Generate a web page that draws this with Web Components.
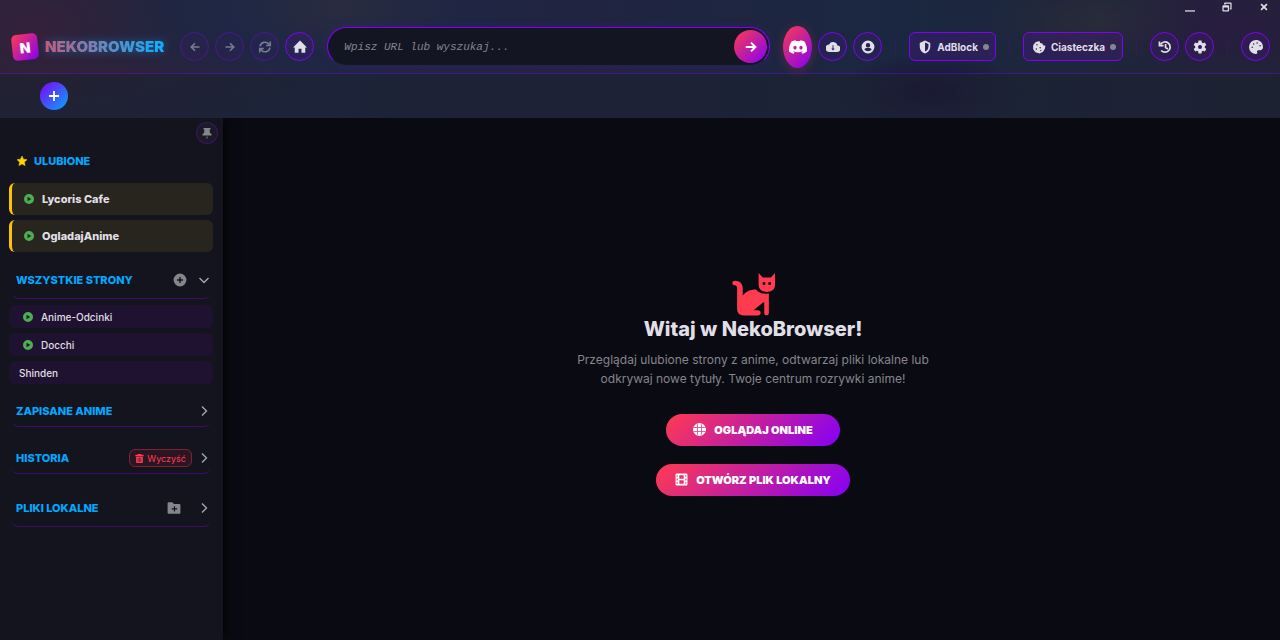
<!DOCTYPE html>
<html lang="pl">
<head>
<meta charset="utf-8">
<meta name="viewport" content="width=device-width, initial-scale=1">
<title>NekoBrowser</title>
<style>
  :root {
    --bg: #0a0a12;
    --panel: #14141f;
    --text: #e0dfe6;
    --muted: #85858c;
    --red: #ff3b50;
    --violet: #8400f5;
    --blue: #00a8ff;
    --green: #4caf50;
  }
  body {
    margin: 0;
    background: var(--bg);
    color: var(--text);
    font-family: Inter, Roboto, "Liberation Sans", sans-serif;
    font-size: 11px;
  }
</style>
</head>
<body>
<neko-app></neko-app>

<script>
const icons = {
  back: '<path d="M21 12H5M12 4.500 4.500 12l7.500 7.500" fill="none" stroke="currentColor" stroke-width="3.400"/>',
  forward: '<path d="M3 12h16M12 4.500l7.500 7.500-7.500 7.500" fill="none" stroke="currentColor" stroke-width="3.400"/>',
  sync: '<path d="M3.500 11a8.500 8.500 0 0 1 15-4l2 2M20.500 13a8.500 8.500 0 0 1-15 4l-2-2M21 2.500v7h-7M3 21.500v-7h7" fill="none" stroke="currentColor" stroke-width="2.800"/>',
  home: '<path d="M9.500 22v-7h5v7H21v-9h3L12 1 0 13h3v9z"/>',
  discord: '<path d="M20.317 4.370a19.790 19.790 0 0 0-4.885-1.515.074.074 0 0 0-.079.037c-.211.375-.445.865-.608 1.250-1.845-.276-3.680-.276-5.487 0-.164-.393-.406-.874-.618-1.250a.077.077 0 0 0-.078-.037 19.736 19.736 0 0 0-4.885 1.515.070.070 0 0 0-.032.028C.533 9.046-.319 13.580.099 18.058a.082.082 0 0 0 .031.056c2.053 1.508 4.041 2.423 5.993 3.029a.078.078 0 0 0 .084-.028c.462-.630.873-1.295 1.226-1.994a.076.076 0 0 0-.042-.106c-.653-.248-1.274-.550-1.872-.892a.077.077 0 0 1-.008-.128c.126-.094.252-.192.372-.291a.074.074 0 0 1 .078-.011c3.928 1.793 8.180 1.793 12.061 0a.074.074 0 0 1 .079.010c.120.099.246.198.373.292a.077.077 0 0 1-.007.128 12.299 12.299 0 0 1-1.873.891.077.077 0 0 0-.041.107c.360.698.772 1.363 1.225 1.993a.076.076 0 0 0 .084.029c1.961-.607 3.950-1.522 6.002-3.029a.077.077 0 0 0 .031-.055c.500-5.177-.838-9.674-3.549-13.660zM8.020 15.331c-1.183 0-2.157-1.086-2.157-2.419s.956-2.419 2.157-2.419c1.211 0 2.176 1.095 2.157 2.419 0 1.333-.956 2.419-2.157 2.419zm7.975 0c-1.183 0-2.157-1.086-2.157-2.419s.955-2.419 2.157-2.419c1.211 0 2.176 1.095 2.157 2.419 0 1.333-.946 2.419-2.157 2.419z"/>',
  cloud: '<path fill-rule="evenodd" d="M19.350 9.500A7.490 7.490 0 0 0 5.350 7.500 6.300 6.300 0 0 0 6 20.500h13a5.500 5.500 0 0 0 .350-11zM11.200 9h1.600v5.500h2.200L12 17.800l-3-3.300h2.200z"/>',
  user: '<path fill-rule="evenodd" d="M12 1a11 11 0 1 0 0 22 11 11 0 0 0 0-22zm0 4a3.800 3.800 0 1 1 0 7.600A3.800 3.800 0 0 1 12 5zm-6.500 11c1-2 4-2.800 6.500-2.800s5.500.8 6.500 2.800a7.800 7.800 0 0 1-13 0z"/>',
  shield: '<path fill-rule="evenodd" d="M12 1 3 5v6c0 5.500 3.800 10.700 9 12 5.200-1.300 9-6.500 9-12V5zm0 3.300 6 2.700v4c0 4-2.500 7.600-6 8.800z"/>',
  cookie: '<path fill-rule="evenodd" d="M11 2 6 4 2 9v7l4 5 7 2 6-3 3-5 1-5-4-1-1-3-4-1-1-3zM8.500 7a1.300 1.300 0 1 1 0 2.600 1.300 1.300 0 0 1 0-2.600zM7.500 14a1.300 1.300 0 1 1 0 2.600 1.300 1.300 0 0 1 0-2.600zm6.500-2a1.300 1.300 0 1 1 0 2.600 1.300 1.300 0 0 1 0-2.600zm1 5a1.200 1.200 0 1 1 0 2.400 1.200 1.200 0 0 1 0-2.400z"/>',
  history: '<path d="M4.500 7.500a8.800 8.800 0 1 1 1 10.500M2.500 2.500v7h7M13 7v6l4 2.500" fill="none" stroke="currentColor" stroke-width="3"/>',
  cog: '<path fill-rule="evenodd" d="M9.500 1h5l.6 3.300 2 1.200L20.300 4.400l2.500 4.300-2.500 2.200v2.300l2.500 2.200-2.500 4.300-3.200-1.100-2 1.200-.6 3.200h-5l-.6-3.200-2-1.200-3.200 1.100-2.500-4.300 2.500-2.200v-2.300L1.200 8.700l2.500-4.300 3.200 1.100 2-1.200zM12 8.600a3.400 3.400 0 1 0 0 6.800 3.400 3.400 0 0 0 0-6.800z"/>',
  palette: '<path fill-rule="evenodd" d="M12 0a12 12 0 0 0 0 24c2 0 2.600-1.600 2-3-.8-1.800 0-3.500 2-3.500h3c2.800 0 5-2 5-5C24 4 18 0 12 0zM5.500 11a1.300 1.300 0 1 1 0 2.600 1.300 1.300 0 0 1 0-2.600zm2.500-5.500a1.300 1.300 0 1 1 0 2.600 1.300 1.300 0 0 1 0-2.600zM14 4a1.300 1.300 0 1 1 0 2.600A1.300 1.300 0 0 1 14 4zm5 4.500a1.300 1.300 0 1 1 0 2.600 1.300 1.300 0 0 1 0-2.600z"/>',
  plus: '<path d="M12 2v20M2 12h20" fill="none" stroke="currentColor" stroke-width="3.600"/>',
  pin: '<path d="M5 2h14v3h-2l1 7 3 2v3H3v-3l3-2 1-7H5z"/><path d="M11 19h2v4h-2z"/>',
  star: '<path d="m12 2 3 6.500 7 .8-5.200 4.900 1.300 7L12 17.800 5.900 21.200l1.300-7L2 9.300l7-.8z" stroke="currentColor" stroke-linejoin="round"/>',
  play: '<path fill-rule="evenodd" d="M12 0a12 12 0 1 0 0 24 12 12 0 0 0 0-24zM8.500 6.500v11l9-5.500z"/>',
  add: '<path fill-rule="evenodd" d="M12 1a11 11 0 1 0 0 22 11 11 0 0 0 0-22zm-1.200 6h2.400v3.800H17v2.400h-3.800V17h-2.400v-3.800H7v-2.400h3.800z"/>',
  down: '<path d="m3 8 9 9 9-9" fill="none" stroke="currentColor" stroke-width="2.800"/>',
  right: '<path d="m8 3 9 9-9 9" fill="none" stroke="currentColor" stroke-width="2.800"/>',
  trash: '<path fill-rule="evenodd" d="M8 0h8l1 2h6v4H1V2h6zM3 7h18v15c0 1-1 2-2 2H5c-1 0-2-1-2-2zm4.500 3v11H9V10zm7.500 0v11h1.500V10zm-3.700 0v11h1.400V10z"/>',
  folder: '<path fill-rule="evenodd" d="M1 4c0-1 1-2 2-2h6l3 3h9c1 0 2 1 2 2v13c0 1-1 2-2 2H3c-1 0-2-1-2-2zm10.800 5v3.500H8v2h3.800V18h2v-3.500h3.700v-2h-3.700V9z"/>',
  globe: '<path fill-rule="evenodd" d="M12 0a12 12 0 1 0 0 24 12 12 0 0 0 0-24zM1.500 7.500h5.800v1.300H1zm7.200 0h6.600v1.300H8.700zm8 0h5.800l.5 1.300h-6.300zM1 15.200h6.300v1.300H1.500zm7.700 0h6.600v1.300H8.700zm8 0H23l-.5 1.300h-5.800zM8.300 1.300 7.500 7v10l1 5.700h1.200L8.800 17V7l.9-5.700zm6 0 .9 5.700v10l-.9 5.700h1.200l1-5.700V7l-1-5.700z"/>',
  film: '<path fill-rule="evenodd" d="M3 1h18a2 2 0 0 1 2 2v18a2 2 0 0 1-2 2H3a2 2 0 0 1-2-2V3c0-1 1-2 2-2zm0 3v3h2V4zm0 6v4h2v-4zm0 7v3h2v-3zM19 4v3h2V4zm0 6v4h2v-4zm0 7v3h2v-3zM8 4v6.500h8V4zm0 9.500V20h8v-6.500z"/>',
  restore: '<path fill-rule="evenodd" d="M7 1h14a2 2 0 0 1 2 2v13a2 2 0 0 1-2 2h-2v-3h1V4H9v2H5V3c0-1 1-2 2-2zM3 8h12a2 2 0 0 1 2 2v11a2 2 0 0 1-2 2H3a2 2 0 0 1-2-2V10c0-1 1-2 2-2zm1 5v7h10v-7z"/>',
  close: '<path d="m5 5 14 14M19 5 5 19" fill="none" stroke="currentColor" stroke-width="4"/>',
  minimize: '<path d="M0 20h24v3H0z"/>',
  cat: '<path d="M3 7.500c4.500 0 7.500 3 7.500 7.500v7c3-4 7-6 13-6 2 3 6 5 12.500 4v19c0 3-4.500 3-4.500 0V28L21 36.500h4c4 0 4 5 0 5H11c-4 0-6-3-6-6V15c0-2-1-3-2.500-3-3 0-3-4.500.5-4.500z"/><path fill-rule="evenodd" d="m26 0 4 4.500h8L42 0v12c0 4-3.500 6.500-8 6.500s-8-2.500-8-6.500zm4 9v2.500h2.500V9zm5.500 0v2.500H38V9z"/>'
};

// shared helper: every element clones its own template into an open root
function mount(host, html) {
  const template = document.createElement("template");
  template.innerHTML = `<style>*, *::before, *::after { box-sizing: border-box; }</style>` + html;
  host.attachShadow({ mode: "open" }).appendChild(template.content.cloneNode(true));
}

customElements.define(
  "neko-icon",
  class extends HTMLElement {
    constructor() {
      super();
      const name = this.getAttribute("name");
      const box = name === "cat" ? "0 0 42 42" : "0 0 24 24";
      mount(this, `
        <style>
          :host { display: inline-flex; flex: none; width: 14px; height: 14px; }
          svg { display: block; width: 100%; height: 100%; }
        </style>
        <svg viewBox="${box}" fill="currentColor" aria-hidden="true">${icons[name]}</svg>
      `);
    }
  }
);

customElements.define(
  "round-button",
  class extends HTMLElement {
    constructor() {
      super();
      const off = this.hasAttribute("disabled") ? "disabled" : "";
      mount(this, `
        <style>
          :host { display: block; flex: none; }
          button {
            display: flex;
            align-items: center;
            justify-content: center;
            width: 29px;
            height: 29px;
            padding: 0;
            border: 1px solid var(--violet);
            border-radius: 50%;
            background: #8400f51c;
            color: var(--text);
          }
          button:disabled { opacity: 0.45; }
          :host([icon="back"]) neko-icon, :host([icon="forward"]) neko-icon { width: 12px; height: 12px; }
          :host([kind="discord"]) button {
            height: 42px;
            border: 0;
            color: #fff;
            background: linear-gradient(135deg, var(--red), var(--violet));
            box-shadow: 0 2px 12px #ff3b5040;
          }
          :host([kind="discord"]) neko-icon { width: 18px; height: 18px; }
          :host([kind="go"]) button {
            width: 33px;
            height: 33px;
            border: 0;
            color: #fff;
            background: linear-gradient(135deg, var(--red), var(--violet));
          }
          :host([kind="go"]) neko-icon { width: 14px; height: 14px; }
          :host([kind="tab"]) button {
            width: 28px;
            height: 28px;
            border: 0;
            color: #fff;
            background: linear-gradient(135deg, var(--violet), #00a8ff);
          }
          :host([kind="pin"]) button {
            width: 22px;
            height: 22px;
            border-color: #8400f550;
            background: #ffffff08;
            color: var(--muted);
          }
          :host([kind="pin"]) neko-icon, :host([kind="tab"]) neko-icon { width: 12px; height: 12px; }
        </style>
        <button type="button" aria-label="${this.getAttribute("label")}" ${off}>
          <neko-icon name="${this.getAttribute("icon")}"></neko-icon>
        </button>
      `);
    }
  }
);

customElements.define(
  "status-button",
  class extends HTMLElement {
    constructor() {
      super();
      mount(this, `
        <style>
          :host { display: block; flex: none; }
          button {
            display: flex;
            align-items: center;
            gap: 5px;
            height: 29px;
            padding: 0 6px 0 8px;
            border: 1px solid var(--violet);
            border-radius: 6px;
            background: #8400f524;
            color: var(--text);
            font: 700 10px Inter, Roboto, sans-serif;
          }
          i { width: 6px; height: 6px; border-radius: 50%; background: var(--muted); }
        </style>
        <button type="button">
          <neko-icon name="${this.getAttribute("icon")}"></neko-icon>
          <slot></slot><i></i>
        </button>
      `);
    }
  }
);

customElements.define(
  "neko-logo",
  class extends HTMLElement {
    constructor() {
      super();
      mount(this, `
        <style>
          :host { display: flex; flex: none; align-items: center; gap: 7px; }
          .badge {
            display: grid;
            place-items: center;
            width: 26px;
            height: 26px;
            border-radius: 5px;
            background: linear-gradient(135deg, var(--red), var(--violet));
            color: #fff;
            font-size: 14px;
            font-weight: 900;
            transform: rotate(-6deg);
          }
          .name {
            background: linear-gradient(90deg, #c65b78, #7c7fb1 40%, #0bb0ff);
            -webkit-background-clip: text;
            background-clip: text;
            color: transparent;
            font-size: 15px;
            font-weight: 900;
            filter: drop-shadow(0 0 5px #00a8ff70);
          }
        </style>
        <span class="badge">N</span>
        <span class="name">NEKOBROWSER</span>
      `);
    }
  }
);

customElements.define(
  "url-bar",
  class extends HTMLElement {
    constructor() {
      super();
      mount(this, `
        <style>
          :host { display: block; flex: 1; min-width: 120px; }
          form {
            display: flex;
            align-items: center;
            height: 39px;
            padding: 0 2px 0 16px;
            border: 1px solid var(--violet);
            border-bottom-color: #27224a;
            border-radius: 20px;
            background: #131523;
            box-shadow: 0 0 10px #8400f524;
          }
          input {
            flex: 1;
            min-width: 0;
            padding: 0;
            border: 0;
            outline: 0;
            background: none;
            color: var(--text);
            font: 11px "Liberation Mono", monospace;
          }
          input::placeholder { color: var(--muted); font-style: italic; opacity: 1; }
        </style>
        <form onsubmit="return false">
          <input type="text" aria-label="Adres URL" placeholder="Wpisz URL lub wyszukaj...">
          <round-button kind="go" icon="forward" label="Przejdź"></round-button>
        </form>
      `);
    }
  }
);

customElements.define(
  "neko-header",
  class extends HTMLElement {
    constructor() {
      super();
      mount(this, `
        <style>
          :host {
            display: block;
            position: relative;
            z-index: 1;
            background:
              radial-gradient(ellipse 150px 110px at 30px 30px, #35203a, transparent),
              radial-gradient(ellipse 180px 50px at 130px 75px, #34203a80, transparent),
              radial-gradient(ellipse 90px 40px at 930px 92px, #1a1038, transparent),
              radial-gradient(ellipse 130px 60px at 1230px 25px, #291c3f, transparent),
              radial-gradient(ellipse 110px 40px at 1100px 20px, #292b38, transparent),
              radial-gradient(ellipse 120px 50px at 340px 8px, #292c40, transparent),
              linear-gradient(90deg, #202439, #1e2745 20%, #202441 45%, #1b2740 70%, #202438);
          }
          .window { display: flex; justify-content: flex-end; gap: 27px; height: 20px; padding: 2px 11px 0 0; }
          .window button { display: flex; padding: 0; border: 0; background: none; color: var(--text); }
          .window neko-icon { width: 10px; height: 10px; }
          .bar {
            display: flex;
            align-items: center;
            gap: 13px;
            height: 54px;
            padding: 0 10px 0 12px;
            border-bottom: 1px solid #8400f560;
          }
          neko-logo { padding-right: 3px; }
          .group { display: flex; align-items: center; gap: 6px; }
          hr { width: 1px; height: 18px; margin: 0; border: 0; background: #8400f524; }
          .tabs {
            display: flex;
            align-items: center;
            height: 44px;
            padding: 0 40px;
            background: #1c213199;
          }
        </style>
        <div class="window">
          <button type="button" aria-label="Minimalizuj"><neko-icon name="minimize"></neko-icon></button>
          <button type="button" aria-label="Przywróć"><neko-icon name="restore"></neko-icon></button>
          <button type="button" aria-label="Zamknij"><neko-icon name="close"></neko-icon></button>
        </div>
        <nav class="bar">
          <neko-logo></neko-logo>
          <div class="group">
            <round-button icon="back" label="Wstecz" disabled></round-button>
            <round-button icon="forward" label="Dalej" disabled></round-button>
            <round-button icon="sync" label="Odśwież" disabled></round-button>
            <round-button icon="home" label="Strona główna"></round-button>
          </div>
          <url-bar></url-bar>
          <div class="group">
            <round-button kind="discord" icon="discord" label="Discord"></round-button>
            <round-button icon="cloud" label="Pobrane"></round-button>
            <round-button icon="user" label="Konto"></round-button>
          </div>
          <hr>
          <status-button icon="shield">AdBlock</status-button>
          <hr>
          <status-button icon="cookie">Ciasteczka</status-button>
          <hr>
          <div class="group">
            <round-button icon="history" label="Historia"></round-button>
            <round-button icon="cog" label="Ustawienia"></round-button>
          </div>
          <hr>
          <round-button icon="palette" label="Motyw"></round-button>
        </nav>
        <div class="tabs">
          <round-button kind="tab" icon="plus" label="Nowa karta"></round-button>
        </div>
      `);
    }
  }
);

customElements.define(
  "side-section",
  class extends HTMLElement {
    constructor() {
      super();
      const arrow = this.getAttribute("arrow");
      mount(this, `
        <style>
          :host { display: block; margin-top: 16px; }
          header {
            display: flex;
            align-items: center;
            gap: 6px;
            height: 31px;
            margin: 0 3px;
            padding-left: 4px;
            border-bottom: 1px solid #8400f560;
            border-radius: 6px;
          }
          :host([tall]) header { height: 37px; }
          :host([plain]) header { border-color: transparent; }
          h2 { flex: 1; margin: 0; color: var(--blue); font-size: 11px; font-weight: 800; }
          .star { width: 12px; height: 12px; color: #ffd500; }
          .arrow { display: flex; padding: 0; border: 0; background: none; color: #a5a5ac; }
          .arrow neko-icon { width: 12px; height: 12px; }
          .list { display: grid; gap: 5px; margin-top: 6px; }
        </style>
        <header>
          ${this.hasAttribute("plain") ? '<neko-icon class="star" name="star"></neko-icon>' : ""}
          <h2>${this.getAttribute("heading")}</h2>
          <slot name="action"></slot>
          ${arrow ? `<button class="arrow" type="button" aria-label="Rozwiń"><neko-icon name="${arrow}"></neko-icon></button>` : ""}
        </header>
        ${this.querySelector("site-link") ? '<div class="list"><slot></slot></div>' : ""}
      `);
    }
  }
);

customElements.define(
  "site-link",
  class extends HTMLElement {
    constructor() {
      super();
      mount(this, `
        <style>
          :host { display: block; }
          a {
            display: flex;
            align-items: center;
            gap: 8px;
            height: 23px;
            padding: 0 10px;
            border-radius: 6px;
            background: #1f1230;
            color: var(--text);
            font-size: 10px;
            font-weight: 500;
            text-decoration: none;
          }
          :host([playable]) a { padding-left: 14px; }
          :host([favourite]) a {
            height: 32px;
            padding-left: 12px;
            border-left: 3px solid #ffc107;
            background: #28241e;
            font-size: 11px;
            font-weight: 800;
          }
          neko-icon { width: 10px; height: 10px; color: var(--green); }
        </style>
        <a href="#">${this.hasAttribute("playable") ? '<neko-icon name="play"></neko-icon>' : ""}<slot></slot></a>
      `);
    }
  }
);

customElements.define(
  "neko-sidebar",
  class extends HTMLElement {
    constructor() {
      super();
      mount(this, `
        <style>
          :host {
            display: block;
            padding: 4px 10px 20px 9px;
            background: var(--panel);
            box-shadow: 0 0 14px #000;
          }
          .pin { display: flex; justify-content: flex-end; margin-right: -5px; }
          .first { margin-top: 2px; }
          .pages { margin-top: 10px; }
          .saved { margin-top: 12px; }
          .add, .clear { display: flex; align-items: center; padding: 0; border: 0; background: none; color: var(--muted); }
          .add { margin-right: 5px; }
          .folder { margin-right: 11px; }
          .clear {
            gap: 3px;
            height: 18px;
            padding: 0 5px;
            border: 1px solid #7a2438;
            border-radius: 6px;
            background: #2b1523;
            color: var(--red);
            font: 9px Inter, Roboto, sans-serif;
          }
          .clear neko-icon { width: 9px; height: 9px; }
        </style>
        <div class="pin"><round-button kind="pin" icon="pin" label="Przypnij panel"></round-button></div>
        <side-section class="first" heading="ULUBIONE" plain>
          <site-link favourite playable>Lycoris Cafe</site-link>
          <site-link favourite playable>OgladajAnime</site-link>
        </side-section>
        <side-section class="pages" heading="WSZYSTKIE STRONY" arrow="down" tall>
          <button class="add" slot="action" type="button" aria-label="Dodaj stronę"><neko-icon name="add"></neko-icon></button>
          <site-link playable>Anime-Odcinki</site-link>
          <site-link playable>Docchi</site-link>
          <site-link>Shinden</site-link>
        </side-section>
        <side-section class="saved" heading="ZAPISANE ANIME" arrow="right"></side-section>
        <side-section heading="HISTORIA" arrow="right">
          <button class="clear" slot="action" type="button"><neko-icon name="trash"></neko-icon>Wyczyść</button>
        </side-section>
        <side-section heading="PLIKI LOKALNE" arrow="right" tall>
          <button class="add folder" slot="action" type="button" aria-label="Dodaj folder"><neko-icon name="folder"></neko-icon></button>
        </side-section>
      `);
    }
  }
);

customElements.define(
  "action-button",
  class extends HTMLElement {
    constructor() {
      super();
      mount(this, `
        <style>
          :host { display: block; }
          button {
            display: flex;
            align-items: center;
            gap: 8px;
            height: 32px;
            padding: 0 19px;
            border: 0;
            border-radius: 16px;
            background: linear-gradient(135deg, var(--red), var(--violet));
            color: #fff;
            font: 900 11px Inter, Roboto, sans-serif;
          }
          :host([wide]) button { padding: 0 27px; }
          neko-icon { width: 13px; height: 13px; }
        </style>
        <button type="button"><neko-icon name="${this.getAttribute("icon")}"></neko-icon><slot></slot></button>
      `);
    }
  }
);

customElements.define(
  "welcome-view",
  class extends HTMLElement {
    constructor() {
      super();
      mount(this, `
        <style>
          :host {
            display: flex;
            flex-direction: column;
            align-items: center;
            justify-content: center;
            padding: 10px 0 0 3px;
            text-align: center;
          }
          .cat { width: 43px; height: 43px; color: var(--red); }
          h1 { margin: 0; font-size: 20px; font-weight: 800; line-height: 26px; }
          p { max-width: 370px; margin: 8px 0 26px; color: var(--muted); font-size: 12px; line-height: 19px; }
          .actions { display: grid; justify-items: center; gap: 18px; }
        </style>
        <neko-icon class="cat" name="cat"></neko-icon>
        <h1>Witaj w NekoBrowser!</h1>
        <p>Przeglądaj ulubione strony z anime, odtwarzaj pliki lokalne lub odkrywaj nowe tytuły. Twoje centrum rozrywki anime!</p>
        <div class="actions">
          <action-button icon="globe" wide>OGLĄDAJ ONLINE</action-button>
          <action-button icon="film">OTWÓRZ PLIK LOKALNY</action-button>
        </div>
      `);
    }
  }
);

customElements.define(
  "neko-app",
  class extends HTMLElement {
    constructor() {
      super();
      mount(this, `
        <style>
          :host {
            display: grid;
            grid-template: auto 1fr / 223px 1fr;
            min-height: 100vh;
          }
          neko-header { grid-column: 1 / -1; }
        </style>
        <neko-header></neko-header>
        <neko-sidebar></neko-sidebar>
        <welcome-view></welcome-view>
      `);
    }
  }
);
</script>
</body>
</html>
